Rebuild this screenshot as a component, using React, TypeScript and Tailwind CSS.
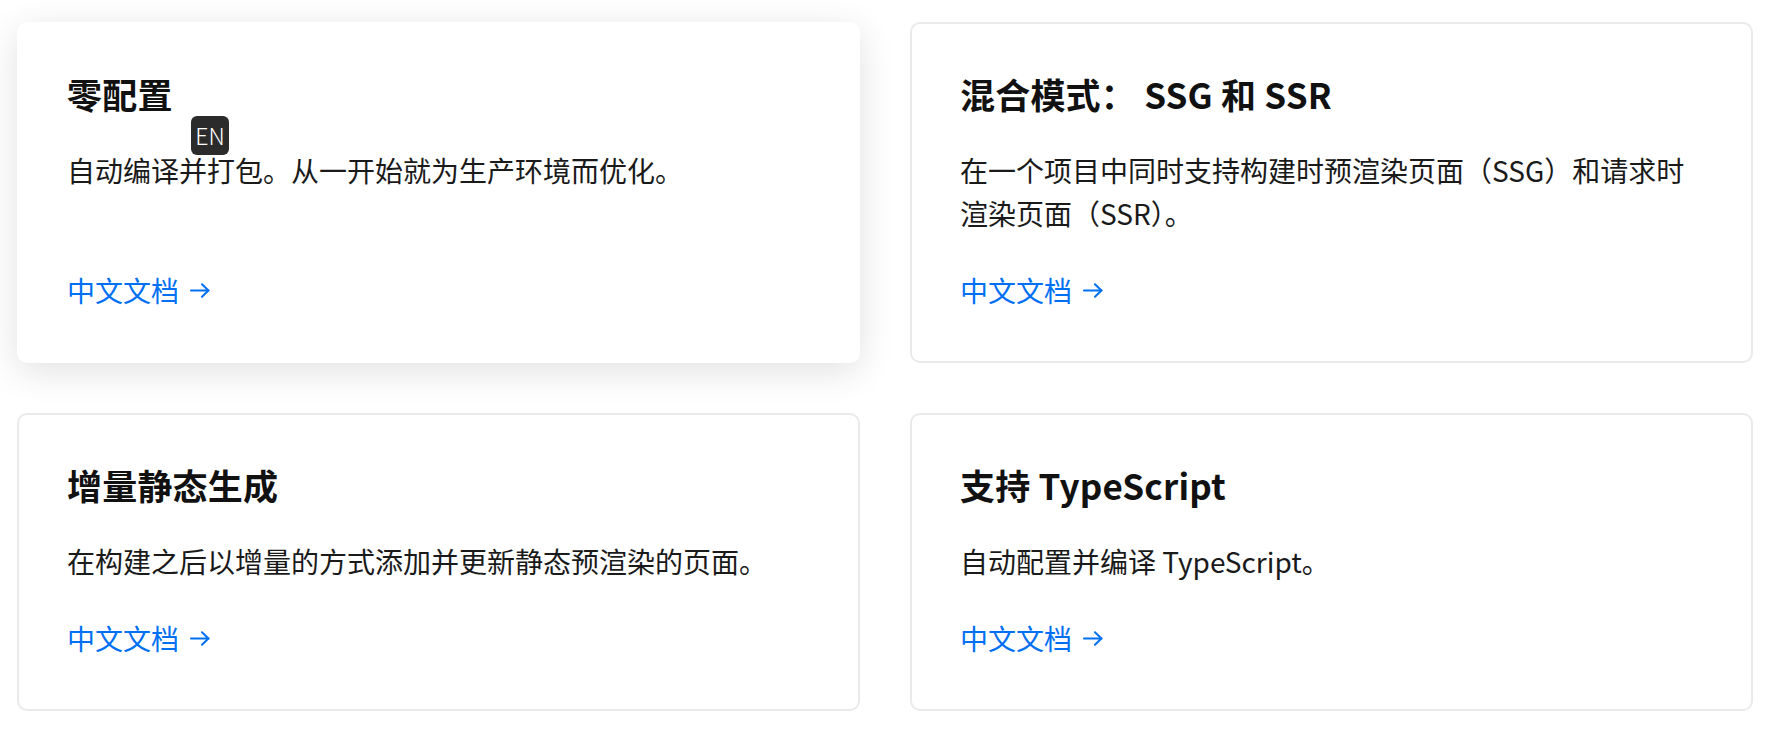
import React from 'react';

type Feature = {
  title: string;
  desc: string;
  active?: boolean;
};

const features: Feature[] = [
  { title: '零配置', desc: '自动编译并打包。从一开始就为生产环境而优化。', active: true },
  { title: '混合模式： SSG 和 SSR', desc: '在一个项目中同时支持构建时预渲染页面（SSG）和请求时渲染页面（SSR）。' },
  { title: '增量静态生成', desc: '在构建之后以增量的方式添加并更新静态预渲染的页面。' },
  { title: '支持 TypeScript', desc: '自动配置并编译 TypeScript。' },
];

const Arrow = () => (
  <svg width="20" height="15" viewBox="0 0 20 15" fill="none" stroke="currentColor" strokeWidth="2" strokeLinecap="round" strokeLinejoin="round">
    <path d="M1 7.5h17.5" />
    <path d="M12 1.3l6.4 6.2-6.4 6.2" />
  </svg>
);

const FeatureCard = ({ feature }: { feature: Feature }) => (
  <div
    className={`flex flex-col rounded-[10px] border-2 bg-white px-[48px] pt-[45px] pb-[49px] ${
      feature.active
        ? 'border-transparent shadow-[0_8px_36px_rgba(0,0,0,0.12)]'
        : 'border-[#eaeaea]'
    }`}
  >
    <h3 className="text-[35px] leading-[49px] font-semibold text-[#111] tracking-[0.2px]">{feature.title}</h3>
    <p className="mt-[31px] flex-1 text-[28px] leading-[43px] text-[#1a1a1a]">{feature.desc}</p>
    <a href="#" className="mt-[34px] inline-flex items-center text-[28px] leading-[43px] text-[#0070f3]">
      中文文档
      <span className="ml-[11px] inline-flex">
        <Arrow />
      </span>
    </a>
  </div>
);

export default function App() {
  return (
    <div
      className="relative min-h-[736px] w-[1780px] bg-white"
      style={{ fontFamily: '"Noto Sans CJK SC", "Noto Sans", sans-serif' }}
    >
      <div className="grid grid-cols-[843px_843px] gap-x-[50px] gap-y-[50px] pl-[17px] pt-[22px]">
        {features.map(f => (
          <FeatureCard key={f.title} feature={f} />
        ))}
      </div>
      <div className="absolute left-[191px] top-[116px] flex h-[39px] w-[38px] items-center justify-center rounded-[6px] bg-[#2b2b2b] text-[23px] font-light text-white">
        EN
      </div>
    </div>
  );
}
